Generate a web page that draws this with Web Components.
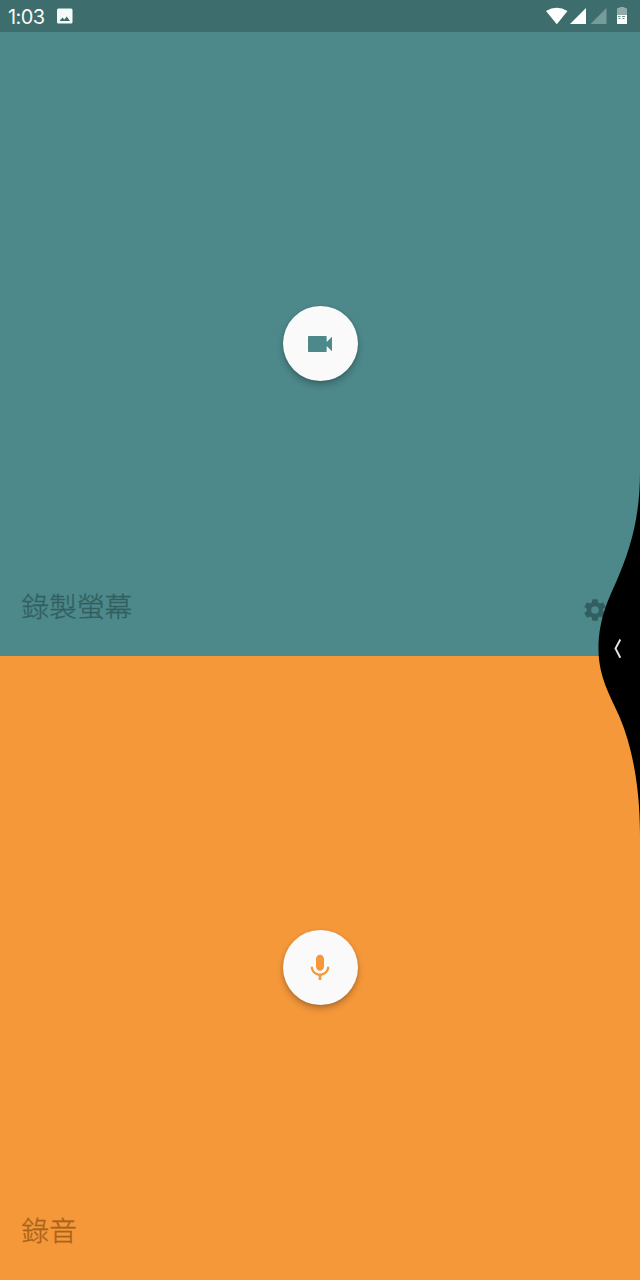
<!DOCTYPE html>
<html lang="zh-Hant"><head><meta charset="utf-8"><title>錄製螢幕</title>
<style>html,body{margin:0;height:100%;overflow:hidden}body{font-family:"Noto Sans CJK TC",sans-serif}</style></head>
<body><recorder-app></recorder-app>
<script>
const define = (name, html) => customElements.define(name, class extends HTMLElement {
  constructor() { super(); this.attachShadow({mode:'open'}).innerHTML = html; }
});

define('status-bar', `<style>
:host{display:flex;justify-content:space-between;height:32px;background:#3d6d6c;color:#f6fbfa;box-sizing:border-box}
.left{display:flex;align-items:center;padding-left:8px}
time{font:400 20px/32px Inter,sans-serif;letter-spacing:-.6px;width:49px;padding-top:1px;box-sizing:border-box}
svg{display:block}
</style>
<div class="left"><time>1:03</time>
<svg width="16" height="16" viewBox="0 0 16 16"><path fill="currentColor" fill-rule="evenodd" d="M1.500 0.500h12.500q1.500 0 1.500 1.500v12q0 1.500-1.500 1.500H1.500Q0 15.500 0 14V2Q0 .5 1.500 .5ZM2.500 13h10.500L9.700 8.500 7.400 11.500 5.500 9.500Z"/></svg></div>
<svg width="96" height="32" viewBox="544 0 96 32">
<path fill="#fff" d="M546 11Q556.500 4.500 567.500 11L556.800 24.300Z"/>
<path fill="#fff" d="M586 8v16h-16Z"/><path fill="#759b9a" d="M606.500 8v16h-16Z"/>
<path fill="#91aaa9" d="M617 9q0-1 1-1h1.500V7h5v1h1.500q1 0 1 1v7h-10Z"/><path fill="#fff" d="M617 15h10v8.500q0 .5-.5.5h-9q-.5 0-.5-.5Z"/>
<path stroke="#71918f" stroke-width="1" fill="none" d="M618 16.500h2.500m1.500 0h3M618.500 18.500h2m2 0h2"/></svg>`);

define('round-button', `<style>
:host{display:flex;align-items:center;justify-content:center;width:75px;height:75px;border-radius:50%;background:#fafafa;color:var(--tone);box-shadow:0 4px 7px rgba(0,0,0,.22),0 1px 3px rgba(0,0,0,.14)}
</style><slot></slot>`);

define('record-panel', `<style>
:host{display:grid;grid-template-rows:1fr auto 1fr;justify-items:center;height:624px;background:var(--tone);box-sizing:border-box;padding-bottom:1px}
.space{min-height:0}
footer{align-self:end;width:100%;height:100px;display:flex;justify-content:space-between;align-items:center;padding:0 34px 0 21.500px;box-sizing:border-box;color:var(--ink)}
.label{font-size:27.700px;line-height:40px;font-weight:300;-webkit-text-stroke:.3px currentColor}
</style><div class="space"></div><round-button><slot></slot></round-button>
<footer><span class="label"><slot name="label"></slot></span><slot name="action"></slot></footer>`);

define('edge-handle', `<style>:host{display:block;position:absolute;right:0;top:464px;width:44px;height:376px}svg{display:block}</style>
<svg width="44" height="376" viewBox="596 464 44 376"><path d="M640 472C640 520 629 552 617 580C609 598 598.500 619 598.500 649C598.500 678 611 697 620 718C633 749 640 790 640 835Z"/>
<path fill="none" stroke="#e5e5e5" stroke-width="1.900" d="M620.300 639.500 615.500 648.500 620.300 657.700"/></svg>`);

define('recorder-app', `<style>
:host{display:block;position:relative;width:640px;height:1280px;overflow:hidden}
svg{display:block}
.screen{--tone:#4d888a;--ink:#315f60}
.audio{--tone:#f5983a;--ink:#a8621b}
</style><status-bar></status-bar>
<record-panel class="screen">
<svg width="32" height="32" viewBox="0 0 24 24"><path fill="currentColor" d="M17 10.500V6.500q0-.5-.5-.5h-13Q3 6 3 6.500v11q0 .5.5.5h13q.5 0 .5-.5v-4l4 4v-11Z"/></svg>
<span slot="label">錄製螢幕</span>
<svg slot="action" width="26" height="26" viewBox="0 0 24 24" style="position:relative;top:5px;left:2px"><path fill="currentColor" d="M19.430 12.980c.04-.32.070-.64.070-.98s-.03-.66-.07-.98l2.110-1.650c.19-.15.24-.42.120-.64l-2-3.460c-.12-.22-.39-.3-.61-.22l-2.490 1c-.52-.4-1.080-.73-1.690-.98l-.38-2.650C14.460 2.180 14.250 2 14 2h-4c-.25 0-.46.180-.49.420l-.38 2.650c-.61.250-1.170.590-1.690.980l-2.490-1c-.23-.09-.49 0-.61.220l-2 3.460c-.13.220-.07.490.12.640l2.110 1.650c-.04.320-.07.650-.07.980s.03.660.07.980l-2.110 1.650c-.19.150-.24.420-.12.640l2 3.460c.12.220.39.300.61.220l2.490-1c.52.400 1.080.730 1.690.980l.38 2.650c.03.240.24.420.49.420h4c.25 0 .46-.18.490-.42l.38-2.650c.61-.25 1.170-.59 1.690-.98l2.490 1c.23.090.49 0 .61-.22l2-3.460c.12-.22.070-.49-.12-.64ZM12 15.500a3.500 3.500 0 1 1 0-7 3.500 3.500 0 0 1 0 7Z"/></svg>
</record-panel>
<record-panel class="audio">
<svg width="32" height="32" viewBox="0 0 24 24"><path fill="currentColor" d="M12 14c1.660 0 3-1.340 3-3V5c0-1.660-1.340-3-3-3S9 3.340 9 5v6c0 1.660 1.340 3 3 3Zm5.300-3c0 3-2.540 5.100-5.300 5.100S6.700 14 6.700 11H5c0 3.410 2.720 6.230 6 6.720V21h2v-3.280c3.280-.48 6-3.300 6-6.720Z"/></svg>
<span slot="label">錄音</span></record-panel>
<edge-handle></edge-handle>`);
</script></body></html>
